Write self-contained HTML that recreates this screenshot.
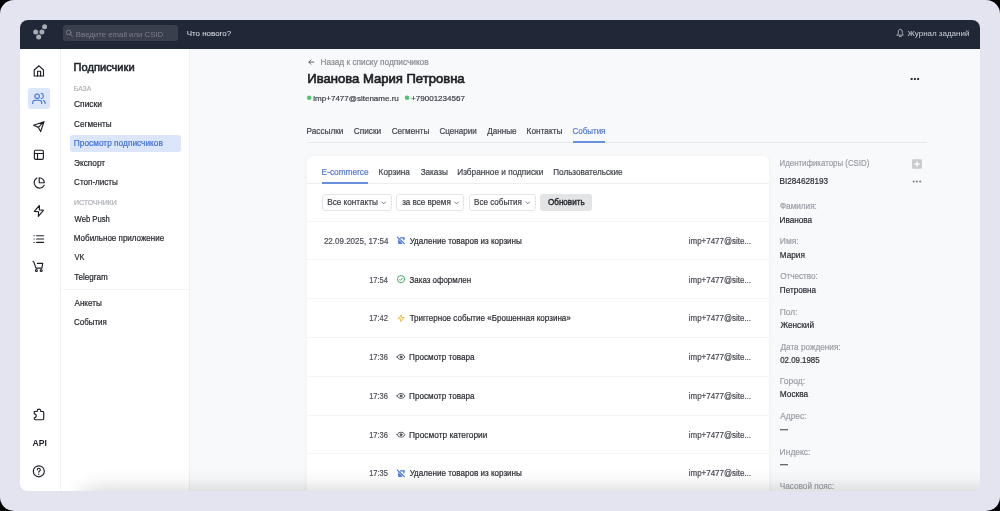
<!DOCTYPE html>
<html><head><meta charset="utf-8">
<style>
*{box-sizing:border-box;margin:0;padding:0}
html,body{width:1000px;height:511px;overflow:hidden;background:#000}
#outer{position:absolute;left:0;top:0;width:1000px;height:511px;background:#e4e4f0;border-radius:14px;overflow:hidden}
#win{position:absolute;left:20px;top:20px;width:960px;height:471px;border-radius:8px;overflow:hidden;background:#f8f9fb}
.a{position:absolute}
svg#ov{position:absolute;left:0;top:0;width:1000px;height:511px}
svg text{font-family:"Liberation Sans",sans-serif;white-space:pre}
svg#ov{will-change:transform}
</style></head><body>
<div id="outer">
<div id="win">
  <div class="a" style="left:0;top:0;width:960px;height:29px;background:#202838"></div>
  <div class="a" style="left:42.6px;top:5.1px;width:115.3px;height:16.2px;background:#393f4c;border-radius:3px"></div>
  <div class="a" style="left:0;top:29px;width:40px;height:442px;background:#fff"></div>
  <div class="a" style="left:40px;top:29px;width:1px;height:442px;background:#eef0f2"></div>
  <div class="a" style="left:41px;top:29px;width:129px;height:442px;background:#fff"></div>
  <div class="a" style="left:169px;top:29px;width:1px;height:442px;background:#eef0f2"></div>
  <div class="a" style="left:8.2px;top:68.2px;width:21.8px;height:21.3px;background:#dce6fa;border-radius:3px"></div>
  <div class="a" style="left:49.6px;top:114.6px;width:111.4px;height:17.1px;background:#dce6fa;border-radius:3px"></div>
  <div class="a" style="left:41px;top:269.4px;width:128px;height:1px;background:#f3f4f6"></div>
  <!-- tabs divider -->
  <div class="a" style="left:287px;top:121.8px;width:620px;height:1px;background:#e6e8eb"></div>
  <div class="a" style="left:552.6px;top:121px;width:32px;height:2px;background:#6990dc"></div>
  <!-- card -->
  <div class="a" style="left:287px;top:136px;width:462.4px;height:360px;background:#fff;border-radius:5px;box-shadow:0 0 1px rgba(20,30,50,0.08),0 0 6px rgba(20,30,50,0.035)">
    <div class="a" style="left:0;top:27px;width:462.4px;height:1px;background:#eceef1"></div>
    <div class="a" style="left:15px;top:26px;width:46px;height:2px;background:#6990dc"></div>
    <div class="a" style="left:15.4px;top:38.4px;width:69.2px;height:16.4px;border:1px solid #e3e5e9;border-radius:3px"></div>
    <div class="a" style="left:89.4px;top:38.4px;width:68px;height:16.4px;border:1px solid #e3e5e9;border-radius:3px"></div>
    <div class="a" style="left:162px;top:38.4px;width:66.6px;height:16.4px;border:1px solid #e3e5e9;border-radius:3px"></div>
    <div class="a" style="left:233px;top:38.4px;width:52px;height:16.4px;background:#e3e4e6;border-radius:3px"></div>
    <div class="a" style="left:0;top:65px;width:462.4px;height:1px;background:#f3f4f6"></div>
    <div class="a" style="left:0;top:103px;width:462.4px;height:1px;background:#f3f4f6"></div>
    <div class="a" style="left:0;top:142px;width:462.4px;height:1px;background:#f3f4f6"></div>
    <div class="a" style="left:0;top:181px;width:462.4px;height:1px;background:#f3f4f6"></div>
    <div class="a" style="left:0;top:220px;width:462.4px;height:1px;background:#f3f4f6"></div>
    <div class="a" style="left:0;top:259px;width:462.4px;height:1px;background:#f3f4f6"></div>
    <div class="a" style="left:0;top:297px;width:462.4px;height:1px;background:#f3f4f6"></div>
  </div>
</div>
</div>
<svg id="ov" viewBox="0 0 1000 511">
<!-- logo -->
<g fill="#a9acb3">
<circle cx="35.7" cy="32" r="2.5"/><circle cx="41.9" cy="32" r="2.5"/><circle cx="44.6" cy="26.7" r="2.5"/><circle cx="38.7" cy="37.1" r="2.5"/>
</g>
<!-- search -->
<g fill="none" stroke="#80858f" stroke-width="0.9" stroke-linecap="round">
<circle cx="68.7" cy="32.5" r="2.3"/><path d="M70.4 34.3 L72.5 36.4"/>
</g>
<!-- bell -->
<g fill="none" stroke="#b5b9c0" stroke-width="0.9" stroke-linecap="round" stroke-linejoin="round">
<path d="M897.2 35.1 H903.4 C902.4 34.2 902.3 33.4 902.3 32.2 C902.3 30.4 901.5 29.3 900.3 29.3 C899.1 29.3 898.3 30.4 898.3 32.2 C898.3 33.4 898.2 34.2 897.2 35.1 Z"/>
<path d="M899.4 36.5 H901.2"/>
</g>
<!-- rail icons -->
<g fill="none" stroke="#1c1f26" stroke-width="1.15" stroke-linecap="round" stroke-linejoin="round">
<path d="M34.2 76 V70 L39 65.8 L43.5 70 V76 Z"/>
<path d="M37.6 76 V71.2 H40.6 V76"/>
<path d="M38.4 127.4 L44 121.7 L40.6 131.6 L38.4 127.4 L33.6 125.3 L44 121.7"/>
<rect x="34.4" y="150.2" width="9" height="9.2" rx="1.3"/>
<path d="M34.4 153.5 H43.4 M37.5 153.5 V159.4"/>
<path d="M36.9 178 A5.35 5.35 0 1 0 44.2 185.2"/>
<path d="M39.2 177.7 V182.7 H44.3 A5.1 5.1 0 0 0 39.2 177.7 Z"/>
<path d="M39.4 205.5 L34.3 211.4 L38.6 211.7 L38.3 216.4 L43.4 210.3 L39.4 209.9 Z"/>
<path d="M36.6 235.7 H43.6 M36.6 239 H43.6 M36.6 242.4 H43.6"/>
<path d="M33 261.4 L33.9 262.1 L35.9 268.1 H41.9 L42.7 263.4 H37.4"/>
<circle cx="36.4" cy="270.5" r="1"/><circle cx="41.2" cy="270.5" r="1"/>
<path d="M34.3 411.5 H37.2 V410.9 A1.8 1.8 0 0 1 40.8 410.9 V411.5 H42.8 A0.9 0.9 0 0 1 43.7 412.4 V418.8 A0.9 0.9 0 0 1 42.8 419.7 H35.2 A0.9 0.9 0 0 1 34.3 418.8 V417.7 A1.95 1.95 0 0 0 34.3 413.8 Z"/>
<circle cx="38.8" cy="471.3" r="5.5"/>
<path d="M37.3 469.7 A1.5 1.5 0 1 1 39.4 471.1 C38.9 471.4 38.8 471.7 38.8 472.2"/>
</g>
<g fill="#1c1f26"><circle cx="34.1" cy="235.7" r="0.6"/><circle cx="34.1" cy="239" r="0.6"/><circle cx="34.1" cy="242.4" r="0.6"/><circle cx="38.8" cy="474.2" r="0.7"/></g>
<!-- users (active) -->
<g fill="none" stroke="#3f6fd6" stroke-width="1.1" stroke-linecap="round" stroke-linejoin="round">
<circle cx="37.1" cy="96.2" r="2.2"/>
<path d="M41.2 93.3 A2.7 2.7 0 0 1 41.2 98.6"/>
<path d="M32.7 103.5 V102.5 A2.3 2.3 0 0 1 35 100.2 H39.4 A2.3 2.3 0 0 1 41.7 102.5 V103.5"/>
<path d="M43.4 100.6 A2.2 2.2 0 0 1 45.1 102.7 V103.5"/>
</g>
<text x="32.5" y="445.9" font-size="8.6" font-weight="bold" fill="#1c1f26" style="font-family:'Liberation Sans',sans-serif">API</text>
<!-- back arrow -->
<g fill="none" stroke="#62666d" stroke-width="1" stroke-linecap="round" stroke-linejoin="round">
<path d="M308.8 62.1 H313.8 M310.9 60 L308.8 62.1 L310.9 64.2"/>
</g>
<!-- green dots -->
<circle cx="309.2" cy="97.8" r="2.25" fill="#4fc46f"/>
<circle cx="407" cy="97.8" r="2.25" fill="#4fc46f"/>
<!-- more dots -->
<g fill="#2a2d35"><rect x="910.6" y="78" width="2" height="2" rx="0.5"/><rect x="913.9" y="78" width="2" height="2" rx="0.5"/><rect x="917.1" y="78" width="2" height="2" rx="0.5"/></g>
<g fill="#7d8087"><circle cx="913.7" cy="181.5" r="1.05"/><circle cx="916.9" cy="181.5" r="1.05"/><circle cx="920.2" cy="181.5" r="1.05"/></g>
<!-- plus box -->
<rect x="912.1" y="159.3" width="9.8" height="9.5" rx="1.3" fill="#c9cacd"/>
<path d="M917 161.4 V166.7 M914.3 164.05 H919.7" stroke="#fff" stroke-width="1.3"/>
<!-- chevrons -->
<g fill="none" stroke="#6a6e75" stroke-width="0.9" stroke-linecap="round" stroke-linejoin="round">
<path d="M381.9 202 L383.7 203.8 L385.5 202"/>
<path d="M454.7 202 L456.5 203.8 L458.3 202"/>
<path d="M525.9 202 L527.7 203.8 L529.5 202"/>
</g>
<!-- row icons -->
<g transform="translate(0 0)"><g fill="none" stroke="#3e6fd8" stroke-width="1.15" stroke-linecap="round" stroke-linejoin="round">
<path d="M397.4 237.2 L404.3 243.6"/>
<path d="M400.6 237.9 H404.3 L403.8 239.9"/>
</g><path d="M397.9 238.9 L401.9 242.8 L402.3 244.1 H398.3 Z" fill="#3e6fd8" fill-opacity="0.9"/></g>
<g transform="translate(0 233)"><g fill="none" stroke="#3e6fd8" stroke-width="1.15" stroke-linecap="round" stroke-linejoin="round">
<path d="M397.4 237.2 L404.3 243.6"/>
<path d="M400.6 237.9 H404.3 L403.8 239.9"/>
</g><path d="M397.9 238.9 L401.9 242.8 L402.3 244.1 H398.3 Z" fill="#3e6fd8" fill-opacity="0.9"/></g>

<g fill="none" stroke="#3aa962" stroke-width="0.95" stroke-linecap="round" stroke-linejoin="round">
<circle cx="401" cy="279.2" r="3.6"/>
<path d="M399.6 279.3 L400.6 280.3 L402.4 278.3"/>
</g>
<path d="M401.4 314.8 L398 318.7 L400.9 318.9 L400.5 321.6 L404.3 317.6 L401.1 317.4 Z" fill="none" stroke="#e8b83a" stroke-width="0.95" stroke-linejoin="round"/>
<g fill="none" stroke="#4a4d55" stroke-width="0.9" stroke-linecap="round" stroke-linejoin="round">
<path d="M397.1 357.0 C398.3 354.8 399.6 354.6 401 354.6 C402.4 354.6 403.7 354.8 404.9 357.0 C403.7 359.2 402.4 359.4 401 359.4 C399.6 359.4 398.3 359.2 397.1 357.0 Z"/>
<circle cx="401" cy="357.0" r="1.0" fill="#4a4d55"/>
<path d="M397.1 395.9 C398.3 393.7 399.6 393.5 401 393.5 C402.4 393.5 403.7 393.7 404.9 395.9 C403.7 398.1 402.4 398.3 401 398.3 C399.6 398.3 398.3 398.1 397.1 395.9 Z"/>
<circle cx="401" cy="395.9" r="1.0" fill="#4a4d55"/>
<path d="M397.1 434.7 C398.3 432.5 399.6 432.3 401 432.3 C402.4 432.3 403.7 432.5 404.9 434.7 C403.7 436.9 402.4 437.1 401 437.1 C399.6 437.1 398.3 436.9 397.1 434.7 Z"/>
<circle cx="401" cy="434.7" r="1.0" fill="#4a4d55"/>
</g>
<!-- dashes -->
<rect x="780" y="429.2" width="8" height="1.1" fill="#4a4d55"/>
<rect x="780" y="464.2" width="8" height="1.1" fill="#4a4d55"/>

<text x="75.86" y="37.00" font-size="8.000" fill="#7a7f8a" stroke="#7a7f8a" stroke-width="0" textLength="87.38" lengthAdjust="spacingAndGlyphs">Введите email или CSID</text>
<text x="186.64" y="36.00" font-size="8.000" fill="#dcdfe4" stroke="#dcdfe4" stroke-width="0.05" textLength="44.55" lengthAdjust="spacingAndGlyphs">Что нового?</text>
<text x="907.52" y="36.00" font-size="8.000" fill="#c5c8ce" stroke="#c5c8ce" stroke-width="0.05" textLength="61.83" lengthAdjust="spacingAndGlyphs">Журнал заданий</text>
<text x="73.59" y="71.00" font-size="10.100" fill="#23272f" stroke="#23272f" stroke-width="0.5" textLength="61.00" lengthAdjust="spacingAndGlyphs">Подписчики</text>
<text x="73.85" y="91.00" font-size="6.900" fill="#aeb1b7" stroke="#aeb1b7" stroke-width="0.2" textLength="17.33" lengthAdjust="spacingAndGlyphs">БАЗА</text>
<text x="73.97" y="107.00" font-size="8.500" fill="#1f2228" stroke="#1f2228" stroke-width="0.2" textLength="28.01" lengthAdjust="spacingAndGlyphs">Списки</text>
<text x="74.08" y="127.00" font-size="8.500" fill="#1f2228" stroke="#1f2228" stroke-width="0.2" textLength="37.51" lengthAdjust="spacingAndGlyphs">Сегменты</text>
<text x="73.82" y="146.00" font-size="8.500" fill="#3f6fd6" stroke="#3f6fd6" stroke-width="0.2" textLength="89.03" lengthAdjust="spacingAndGlyphs">Просмотр подписчиков</text>
<text x="74.08" y="166.00" font-size="8.500" fill="#1f2228" stroke="#1f2228" stroke-width="0.2" textLength="30.99" lengthAdjust="spacingAndGlyphs">Экспорт</text>
<text x="74.08" y="185.00" font-size="8.500" fill="#1f2228" stroke="#1f2228" stroke-width="0.2" textLength="43.81" lengthAdjust="spacingAndGlyphs">Стоп-листы</text>
<text x="73.95" y="205.00" font-size="6.900" fill="#aeb1b7" stroke="#aeb1b7" stroke-width="0.2" textLength="42.90" lengthAdjust="spacingAndGlyphs">ИСТОЧНИКИ</text>
<text x="74.50" y="222.00" font-size="8.500" fill="#1f2228" stroke="#1f2228" stroke-width="0.2" textLength="35.38" lengthAdjust="spacingAndGlyphs">Web Push</text>
<text x="73.82" y="241.00" font-size="8.500" fill="#1f2228" stroke="#1f2228" stroke-width="0.2" textLength="90.39" lengthAdjust="spacingAndGlyphs">Мобильное приложение</text>
<text x="74.50" y="260.00" font-size="8.500" fill="#1f2228" stroke="#1f2228" stroke-width="0.2" textLength="10.06" lengthAdjust="spacingAndGlyphs">VK</text>
<text x="74.33" y="280.00" font-size="8.500" fill="#1f2228" stroke="#1f2228" stroke-width="0.2" textLength="33.51" lengthAdjust="spacingAndGlyphs">Telegram</text>
<text x="74.50" y="306.00" font-size="8.500" fill="#1f2228" stroke="#1f2228" stroke-width="0.2" textLength="27.28" lengthAdjust="spacingAndGlyphs">Анкеты</text>
<text x="74.08" y="325.00" font-size="8.500" fill="#1f2228" stroke="#1f2228" stroke-width="0.2" textLength="32.75" lengthAdjust="spacingAndGlyphs">События</text>
<text x="320.42" y="65.00" font-size="8.500" fill="#878a91" stroke="#878a91" stroke-width="0.2" textLength="108.23" lengthAdjust="spacingAndGlyphs">Назад к списку подписчиков</text>
<text x="307.32" y="83.00" font-size="12.300" fill="#1b1d22" stroke="#1b1d22" stroke-width="0.6" textLength="157.34" lengthAdjust="spacingAndGlyphs">Иванова Мария Петровна</text>
<text x="313.32" y="101.00" font-size="8.050" fill="#3a3d44" stroke="#3a3d44" stroke-width="0.2" textLength="85.52" lengthAdjust="spacingAndGlyphs">imp+7477@sitename.ru</text>
<text x="410.98" y="101.00" font-size="8.050" fill="#3a3d44" stroke="#3a3d44" stroke-width="0.2" textLength="54.09" lengthAdjust="spacingAndGlyphs">+79001234567</text>
<text x="306.62" y="134.00" font-size="8.500" fill="#40444c" stroke="#40444c" stroke-width="0.2" textLength="36.76" lengthAdjust="spacingAndGlyphs">Рассылки</text>
<text x="353.68" y="134.00" font-size="8.500" fill="#40444c" stroke="#40444c" stroke-width="0.2" textLength="27.51" lengthAdjust="spacingAndGlyphs">Списки</text>
<text x="391.68" y="134.00" font-size="8.500" fill="#40444c" stroke="#40444c" stroke-width="0.2" textLength="37.61" lengthAdjust="spacingAndGlyphs">Сегменты</text>
<text x="439.48" y="134.00" font-size="8.500" fill="#40444c" stroke="#40444c" stroke-width="0.2" textLength="37.41" lengthAdjust="spacingAndGlyphs">Сценарии</text>
<text x="487.30" y="134.00" font-size="8.500" fill="#40444c" stroke="#40444c" stroke-width="0.2" textLength="29.31" lengthAdjust="spacingAndGlyphs">Данные</text>
<text x="526.62" y="134.00" font-size="8.500" fill="#40444c" stroke="#40444c" stroke-width="0.2" textLength="35.86" lengthAdjust="spacingAndGlyphs">Контакты</text>
<text x="572.48" y="134.00" font-size="8.500" fill="#5079d2" stroke="#5079d2" stroke-width="0.2" textLength="32.95" lengthAdjust="spacingAndGlyphs">События</text>
<text x="321.62" y="175.00" font-size="8.500" fill="#5079d2" stroke="#5079d2" stroke-width="0.2" textLength="46.99" lengthAdjust="spacingAndGlyphs">E-commerce</text>
<text x="378.62" y="175.00" font-size="8.500" fill="#40444c" stroke="#40444c" stroke-width="0.2" textLength="31.25" lengthAdjust="spacingAndGlyphs">Корзина</text>
<text x="420.65" y="175.00" font-size="8.500" fill="#40444c" stroke="#40444c" stroke-width="0.2" textLength="27.24" lengthAdjust="spacingAndGlyphs">Заказы</text>
<text x="457.22" y="175.00" font-size="8.500" fill="#40444c" stroke="#40444c" stroke-width="0.2" textLength="86.06" lengthAdjust="spacingAndGlyphs">Избранное и подписки</text>
<text x="553.22" y="175.00" font-size="8.500" fill="#40444c" stroke="#40444c" stroke-width="0.2" textLength="69.39" lengthAdjust="spacingAndGlyphs">Пользовательские</text>
<text x="327.22" y="205.00" font-size="8.500" fill="#3a3d44" stroke="#3a3d44" stroke-width="0.2" textLength="50.66" lengthAdjust="spacingAndGlyphs">Все контакты</text>
<text x="402.13" y="205.00" font-size="8.500" fill="#3a3d44" stroke="#3a3d44" stroke-width="0.2" textLength="48.69" lengthAdjust="spacingAndGlyphs">за все время</text>
<text x="474.02" y="205.00" font-size="8.500" fill="#3a3d44" stroke="#3a3d44" stroke-width="0.2" textLength="47.80" lengthAdjust="spacingAndGlyphs">Все события</text>
<text x="547.96" y="205.00" font-size="8.500" fill="#25282e" stroke="#25282e" stroke-width="0.4" textLength="36.69" lengthAdjust="spacingAndGlyphs">Обновить</text>
<text x="779.52" y="166.00" font-size="8.500" fill="#9a9da4" stroke="#9a9da4" stroke-width="0.2" textLength="89.83" lengthAdjust="spacingAndGlyphs">Идентификаторы (CSID)</text>
<text x="779.62" y="184.00" font-size="8.500" fill="#2a2d33" stroke="#2a2d33" stroke-width="0.2" textLength="48.49" lengthAdjust="spacingAndGlyphs">BI284628193</text>
<text x="779.88" y="209.00" font-size="8.500" fill="#9a9da4" stroke="#9a9da4" stroke-width="0.2" textLength="36.97" lengthAdjust="spacingAndGlyphs">Фамилия:</text>
<text x="779.62" y="223.00" font-size="8.500" fill="#2a2d33" stroke="#2a2d33" stroke-width="0.2" textLength="32.45" lengthAdjust="spacingAndGlyphs">Иванова</text>
<text x="779.82" y="244.00" font-size="8.500" fill="#9a9da4" stroke="#9a9da4" stroke-width="0.2" textLength="18.83" lengthAdjust="spacingAndGlyphs">Имя:</text>
<text x="779.82" y="258.00" font-size="8.500" fill="#2a2d33" stroke="#2a2d33" stroke-width="0.2" textLength="25.00" lengthAdjust="spacingAndGlyphs">Мария</text>
<text x="780.16" y="279.00" font-size="8.500" fill="#9a9da4" stroke="#9a9da4" stroke-width="0.2" textLength="37.69" lengthAdjust="spacingAndGlyphs">Отчество:</text>
<text x="779.82" y="293.00" font-size="8.500" fill="#2a2d33" stroke="#2a2d33" stroke-width="0.2" textLength="36.25" lengthAdjust="spacingAndGlyphs">Петровна</text>
<text x="779.82" y="315.00" font-size="8.500" fill="#9a9da4" stroke="#9a9da4" stroke-width="0.2" textLength="17.73" lengthAdjust="spacingAndGlyphs">Пол:</text>
<text x="780.41" y="328.00" font-size="8.500" fill="#2a2d33" stroke="#2a2d33" stroke-width="0.2" textLength="33.67" lengthAdjust="spacingAndGlyphs">Женский</text>
<text x="780.50" y="350.00" font-size="8.500" fill="#9a9da4" stroke="#9a9da4" stroke-width="0.2" textLength="60.15" lengthAdjust="spacingAndGlyphs">Дата рождения:</text>
<text x="780.25" y="363.00" font-size="8.500" fill="#2a2d33" stroke="#2a2d33" stroke-width="0.2" textLength="39.36" lengthAdjust="spacingAndGlyphs">02.09.1985</text>
<text x="779.82" y="384.00" font-size="8.500" fill="#9a9da4" stroke="#9a9da4" stroke-width="0.2" textLength="25.23" lengthAdjust="spacingAndGlyphs">Город:</text>
<text x="779.82" y="397.00" font-size="8.500" fill="#2a2d33" stroke="#2a2d33" stroke-width="0.2" textLength="28.35" lengthAdjust="spacingAndGlyphs">Москва</text>
<text x="780.30" y="419.00" font-size="8.500" fill="#9a9da4" stroke="#9a9da4" stroke-width="0.2" textLength="26.05" lengthAdjust="spacingAndGlyphs">Адрес:</text>
<text x="779.62" y="455.00" font-size="8.500" fill="#9a9da4" stroke="#9a9da4" stroke-width="0.2" textLength="30.83" lengthAdjust="spacingAndGlyphs">Индекс:</text>
<text x="779.70" y="489.00" font-size="8.500" fill="#9a9da4" stroke="#9a9da4" stroke-width="0.2" textLength="54.54" lengthAdjust="spacingAndGlyphs">Часовой пояс:</text>
<text x="323.88" y="244.00" font-size="8.500" fill="#4d5058" stroke="#4d5058" stroke-width="0.2" textLength="64.55" lengthAdjust="spacingAndGlyphs">22.09.2025, 17:54</text>
<text x="409.63" y="244.00" font-size="8.500" fill="#2a2d33" stroke="#2a2d33" stroke-width="0.2" textLength="112.25" lengthAdjust="spacingAndGlyphs">Удаление товаров из корзины</text>
<text x="688.79" y="244.00" font-size="8.500" fill="#484b53" stroke="#484b53" stroke-width="0.2" textLength="62.26" lengthAdjust="spacingAndGlyphs">imp+7477@site...</text>
<text x="369.20" y="283.00" font-size="8.500" fill="#4d5058" stroke="#4d5058" stroke-width="0.2" textLength="18.62" lengthAdjust="spacingAndGlyphs">17:54</text>
<text x="409.55" y="283.00" font-size="8.500" fill="#2a2d33" stroke="#2a2d33" stroke-width="0.2" textLength="61.58" lengthAdjust="spacingAndGlyphs">Заказ оформлен</text>
<text x="688.79" y="283.00" font-size="8.500" fill="#484b53" stroke="#484b53" stroke-width="0.2" textLength="62.26" lengthAdjust="spacingAndGlyphs">imp+7477@site...</text>
<text x="369.20" y="321.00" font-size="8.500" fill="#4d5058" stroke="#4d5058" stroke-width="0.2" textLength="18.79" lengthAdjust="spacingAndGlyphs">17:42</text>
<text x="409.63" y="321.00" font-size="8.500" fill="#2a2d33" stroke="#2a2d33" stroke-width="0.2" textLength="161.18" lengthAdjust="spacingAndGlyphs">Триггерное событие «Брошенная корзина»</text>
<text x="688.79" y="321.00" font-size="8.500" fill="#484b53" stroke="#484b53" stroke-width="0.2" textLength="62.26" lengthAdjust="spacingAndGlyphs">imp+7477@site...</text>
<text x="369.20" y="360.00" font-size="8.500" fill="#4d5058" stroke="#4d5058" stroke-width="0.2" textLength="18.70" lengthAdjust="spacingAndGlyphs">17:36</text>
<text x="409.12" y="360.00" font-size="8.500" fill="#2a2d33" stroke="#2a2d33" stroke-width="0.2" textLength="65.35" lengthAdjust="spacingAndGlyphs">Просмотр товара</text>
<text x="688.79" y="360.00" font-size="8.500" fill="#484b53" stroke="#484b53" stroke-width="0.2" textLength="62.26" lengthAdjust="spacingAndGlyphs">imp+7477@site...</text>
<text x="369.20" y="399.00" font-size="8.500" fill="#4d5058" stroke="#4d5058" stroke-width="0.2" textLength="18.70" lengthAdjust="spacingAndGlyphs">17:36</text>
<text x="409.12" y="399.00" font-size="8.500" fill="#2a2d33" stroke="#2a2d33" stroke-width="0.2" textLength="65.35" lengthAdjust="spacingAndGlyphs">Просмотр товара</text>
<text x="688.79" y="399.00" font-size="8.500" fill="#484b53" stroke="#484b53" stroke-width="0.2" textLength="62.26" lengthAdjust="spacingAndGlyphs">imp+7477@site...</text>
<text x="369.20" y="438.00" font-size="8.500" fill="#4d5058" stroke="#4d5058" stroke-width="0.2" textLength="18.70" lengthAdjust="spacingAndGlyphs">17:36</text>
<text x="409.12" y="438.00" font-size="8.500" fill="#2a2d33" stroke="#2a2d33" stroke-width="0.2" textLength="78.26" lengthAdjust="spacingAndGlyphs">Просмотр категории</text>
<text x="688.79" y="438.00" font-size="8.500" fill="#484b53" stroke="#484b53" stroke-width="0.2" textLength="62.26" lengthAdjust="spacingAndGlyphs">imp+7477@site...</text>
<text x="369.20" y="476.00" font-size="8.500" fill="#4d5058" stroke="#4d5058" stroke-width="0.2" textLength="18.70" lengthAdjust="spacingAndGlyphs">17:35</text>
<text x="409.63" y="476.00" font-size="8.500" fill="#2a2d33" stroke="#2a2d33" stroke-width="0.2" textLength="112.25" lengthAdjust="spacingAndGlyphs">Удаление товаров из корзины</text>
<text x="688.79" y="476.00" font-size="8.500" fill="#484b53" stroke="#484b53" stroke-width="0.2" textLength="62.26" lengthAdjust="spacingAndGlyphs">imp+7477@site...</text>
</svg>
<div class="a" style="left:20px;top:20px;width:960px;height:471px;border-radius:8px;overflow:hidden"><div class="a" style="left:60px;top:472px;width:1000px;height:40px;border-radius:20px;box-shadow:0 0 20px 4px rgba(0,0,0,0.16)"></div></div>
</body></html>
